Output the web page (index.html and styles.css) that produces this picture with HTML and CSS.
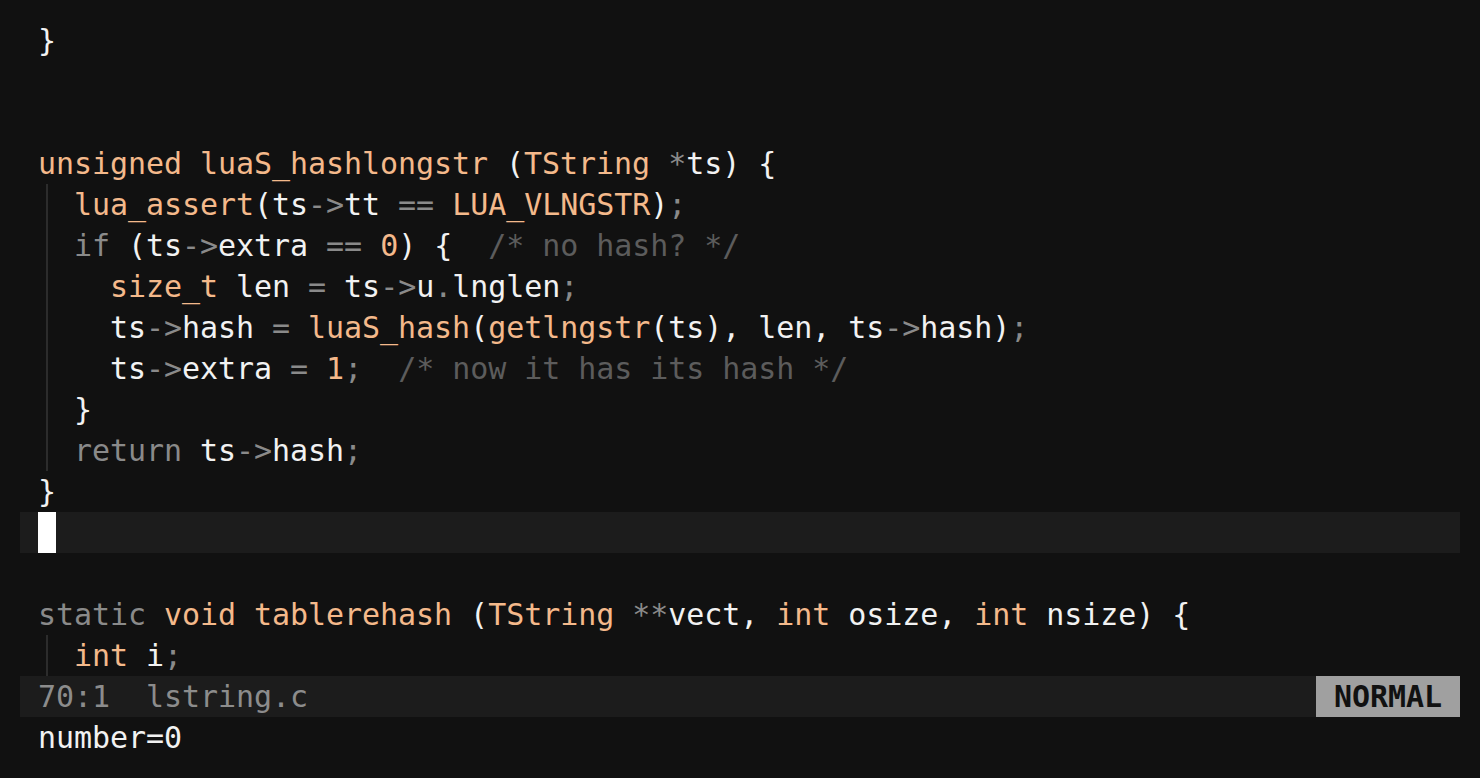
FILE: index.html
```html
<!DOCTYPE html>
<html>
<head>
<meta charset="utf-8">
<link rel="stylesheet" href="styles.css">
</head>
<body>
<div class="editor">
  <div class="buffer">
    <div class="ln"><span class="w">}</span></div>
    <div class="ln"></div>
    <div class="ln"></div>
    <div class="ln"><span class="t">unsigned</span> <span class="t">luaS_hashlongstr</span> <span class="w">(</span><span class="t">TString</span> <span class="o">*</span><span class="w">ts) {</span></div>
    <div class="ln"><span class="g"> </span> <span class="t">lua_assert</span><span class="w">(ts</span><span class="o">-&gt;</span><span class="w">tt</span> <span class="o">==</span> <span class="t">LUA_VLNGSTR</span><span class="w">)</span><span class="o">;</span></div>
    <div class="ln"><span class="g"> </span> <span class="o">if</span> <span class="w">(ts</span><span class="o">-&gt;</span><span class="w">extra</span> <span class="o">==</span> <span class="t">0</span><span class="w">) {</span>  <span class="c">/* no hash? */</span></div>
    <div class="ln"><span class="g"> </span>   <span class="t">size_t</span> <span class="w">len</span> <span class="o">=</span> <span class="w">ts</span><span class="o">-&gt;</span><span class="w">u</span><span class="o">.</span><span class="w">lnglen</span><span class="o">;</span></div>
    <div class="ln"><span class="g"> </span>   <span class="w">ts</span><span class="o">-&gt;</span><span class="w">hash</span> <span class="o">=</span> <span class="t">luaS_hash</span><span class="w">(</span><span class="t">getlngstr</span><span class="w">(ts), len, ts</span><span class="o">-&gt;</span><span class="w">hash)</span><span class="o">;</span></div>
    <div class="ln"><span class="g"> </span>   <span class="w">ts</span><span class="o">-&gt;</span><span class="w">extra</span> <span class="o">=</span> <span class="t">1</span><span class="o">;</span>  <span class="c">/* now it has its hash */</span></div>
    <div class="ln"><span class="g"> </span> <span class="w">}</span></div>
    <div class="ln"><span class="g"> </span> <span class="o">return</span> <span class="w">ts</span><span class="o">-&gt;</span><span class="w">hash</span><span class="o">;</span></div>
    <div class="ln"><span class="w">}</span></div>
    <div class="ln cur"><span class="cursor"> </span></div>
    <div class="ln"></div>
    <div class="ln"><span class="o">static</span> <span class="t">void</span> <span class="t">tablerehash</span> <span class="w">(</span><span class="t">TString</span> <span class="o">**</span><span class="w">vect,</span> <span class="t">int</span> <span class="w">osize,</span> <span class="t">int</span> <span class="w">nsize) {</span></div>
    <div class="ln"><span class="g"> </span> <span class="t">int</span> <span class="w">i</span><span class="o">;</span></div>
  </div>
  <div class="status">
    <span class="pos">70:1  lstring.c</span>
    <span class="mode"> NORMAL </span>
  </div>
  <div class="cmd">number=0</div>
</div>
</body>
</html>
```

FILE: styles.css
```css
html, body {
  margin: 0;
  padding: 0;
  background: #111111;
}
body {
  width: 1480px;
  height: 778px;
  overflow: hidden;
}
.editor {
  margin: 20px;
  width: 1440px;
  display: flex;
  flex-direction: column;
  font-family: "DejaVu Sans Mono", "Liberation Mono", monospace;
  font-size: 30px;
  letter-spacing: -0.06px;
  color: #f2f2f2;
}
.buffer {
  display: flex;
  flex-direction: column;
}
.ln {
  height: 41px;
  line-height: 41px;
  padding-left: 18px;
  white-space: pre;
}
.cur {
  background: #1c1c1c;
}
.cursor {
  display: inline-block;
  width: 18px;
  height: 41px;
  vertical-align: top;
  background: #ffffff;
}
.g {
  display: inline-block;
  width: 18px;
  height: 41px;
  vertical-align: top;
  background: linear-gradient(to right, transparent 8px, #2c2c2c 8px, #2c2c2c 10px, transparent 10px);
}
.w { color: #f2f2f2; }
.t { color: #f4b98b; }
.o { color: #8a8a8a; }
.c { color: #5c5c5c; }
.status {
  height: 41px;
  line-height: 41px;
  background: #1c1c1c;
  display: flex;
  justify-content: space-between;
  white-space: pre;
}
.pos {
  padding-left: 18px;
  color: #8c8c8c;
}
.mode {
  background: #a0a0a0;
  color: #111111;
  font-weight: bold;
}
.cmd {
  height: 41px;
  line-height: 41px;
  padding-left: 18px;
  color: #f2f2f2;
  white-space: pre;
}
```
